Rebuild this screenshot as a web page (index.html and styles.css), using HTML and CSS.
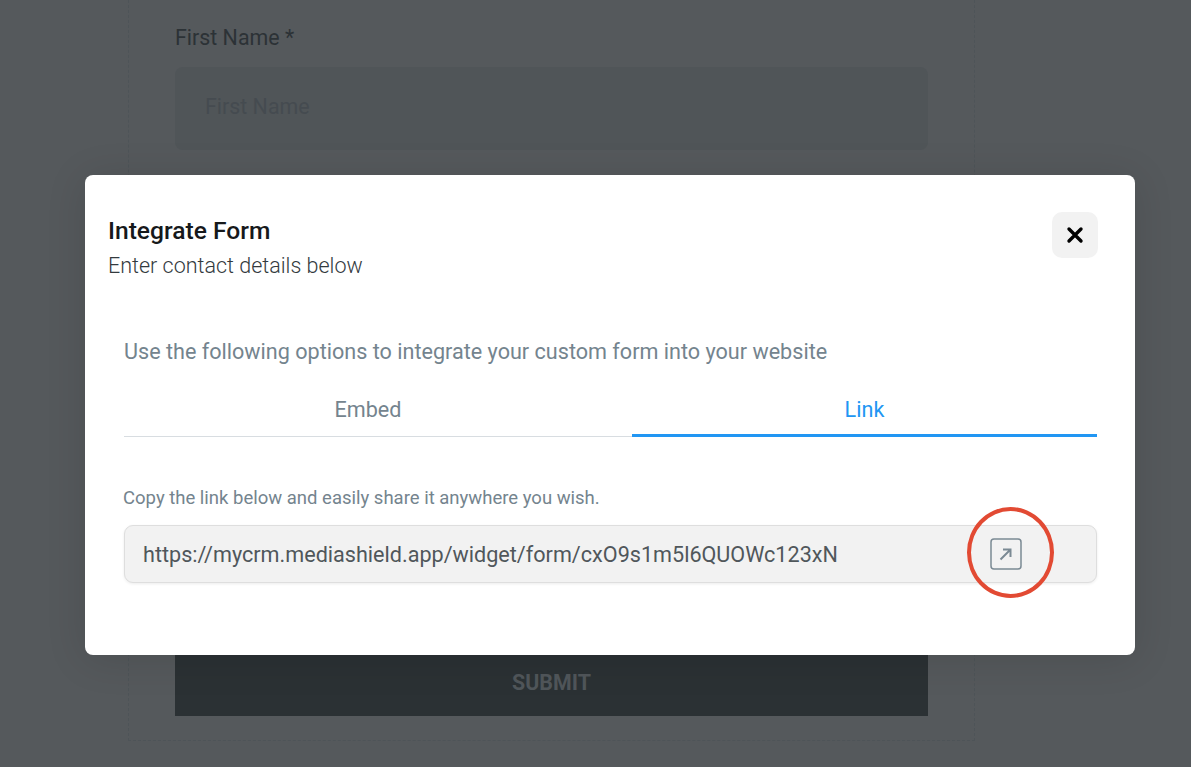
FILE: index.html
```html
<!DOCTYPE html>
<html lang="en">
<head>
    <meta charset="UTF-8">
    <meta name="viewport" content="width=device-width, initial-scale=1.0">
    <title>Integrate Form</title>
    <link rel="stylesheet" href="styles.css">
</head>
<body>
    <div class="page">
        <div class="form-card">
            <label class="field-label">First Name *</label>
            <div class="field-input">First Name</div>
            <div class="submit-btn">SUBMIT</div>
        </div>
    </div>

    <div class="modal">
        <div class="modal-header">
            <div>
                <h1>Integrate Form</h1>
                <p class="subtitle">Enter contact details below</p>
            </div>
            <button class="close-btn" type="button" aria-label="Close">
                <svg width="18" height="18" viewBox="0 0 18 18">
                    <path d="M3 3L15 15M15 3L3 15" stroke="#000" stroke-width="3.4" stroke-linecap="round"/>
                </svg>
            </button>
        </div>

        <div class="modal-body">
            <p class="intro">Use the following options to integrate your custom form into your website</p>

            <div class="tabs">
                <div class="tab">Embed</div>
                <div class="tab active">Link</div>
            </div>

            <p class="hint">Copy the link below and easily share it anywhere you wish.</p>

            <div class="link-box">
                <span class="link-text">https://mycrm.mediashield.app/widget/form/cxO9s1m5l6QUOWc123xN</span>
                <div class="open-link">
                    <svg width="32" height="32" viewBox="0 0 32 32" fill="none">
                        <rect x="1" y="1" width="30" height="30" rx="3" stroke="#7b8a94" stroke-width="1.5"/>
                        <path d="M10.5 21.5L20.5 11.5M13 11.5H20.5V19" stroke="#7b8a94" stroke-width="2"/>
                    </svg>
                    <span class="highlight-ring"></span>
                </div>
            </div>
        </div>
    </div>
</body>
</html>
```

FILE: styles.css
```css
* {
    box-sizing: border-box;
}
html, body {
    height: 100%;
}
body {
    margin: 0;
    overflow: hidden;
    background-color: #55595c;
    font-family: Roboto, "Liberation Sans", sans-serif;
}
.page {
    height: 100%;
    padding-left: 128px;
}
.form-card {
    display: flex;
    flex-direction: column;
    width: 847px;
    height: 741px;
    padding: 0 46px;
    border-left: 1px dashed #4e5458;
    border-right: 1px dashed #4e5458;
    border-bottom: 1px dashed #4e5458;
}
.field-label {
    margin-top: 25px;
    font-size: 21.4px;
    line-height: 26px;
    color: #2c3236;
}
.field-input {
    height: 83px;
    margin-top: 16px;
    padding: 0 30px;
    background-color: #505558;
    border-radius: 8px;
    font-size: 21.4px;
    line-height: 79px;
    color: #454b50;
}
.submit-btn {
    height: 62px;
    margin-top: 504px;
    padding-top: 13px;
    background-color: #2b3134;
    font-size: 21.4px;
    font-weight: 700;
    line-height: 32px;
    text-align: center;
    color: #50565a;
}
.modal {
    position: absolute;
    left: 85px;
    top: 175px;
    width: 1050px;
    height: 480px;
    padding: 37px 37px 0 23px;
    background-color: white;
    border-radius: 8px;
    box-shadow: 0 4px 40px rgba(0, 0, 0, 0.12);
}
.modal-header {
    display: flex;
    justify-content: space-between;
    align-items: flex-start;
}
h1 {
    margin: 0;
    padding-top: 2px;
    font-size: 24.6px;
    font-weight: 500;
    line-height: 34px;
    color: #16191b;
}
.subtitle {
    margin: 1px 0 0;
    font-size: 21.5px;
    font-weight: 300;
    line-height: 34px;
    color: #333a3e;
}
.close-btn {
    display: flex;
    justify-content: center;
    align-items: center;
    width: 46px;
    height: 46px;
    padding: 0;
    background-color: #f2f2f2;
    border: none;
    border-radius: 10px;
}
.modal-body {
    padding-left: 16px;
}
.intro {
    margin: 52px 0 0;
    font-size: 21.6px;
    line-height: 34px;
    color: #74848e;
}
.tabs {
    display: flex;
    height: 51px;
    margin-top: 17px;
    margin-right: 1px;
    border-bottom: 1px solid #d8dde1;
}
.tab {
    width: 508px;
    padding: 9px 20px 0 0;
    font-size: 21.6px;
    line-height: 30px;
    text-align: center;
    color: #74848e;
}
.tab.active {
    width: 465px;
    height: 51px;
    padding-right: 0;
    border-bottom: 3px solid #2196f3;
    color: #2196f3;
}
.hint {
    margin: 49px 0 0 -1px;
    font-size: 18.5px;
    line-height: 24px;
    color: #74848e;
}
.link-box {
    display: flex;
    justify-content: space-between;
    align-items: center;
    width: 973px;
    height: 58px;
    margin-top: 15px;
    padding: 0 75px 0 18px;
    background-color: #f2f2f2;
    border: 1px solid #dedede;
    border-radius: 9px;
    box-shadow: 0 1px 3px rgba(0, 0, 0, 0.08);
}
.link-text {
    font-size: 21.6px;
    color: #50575b;
}
.open-link {
    position: relative;
    display: flex;
    width: 32px;
    height: 32px;
    left: 1px;
}
.highlight-ring {
    position: absolute;
    left: -23px;
    top: -31px;
    width: 87px;
    height: 91px;
    border: 4px solid #e24a33;
    border-radius: 50%;
}
```
